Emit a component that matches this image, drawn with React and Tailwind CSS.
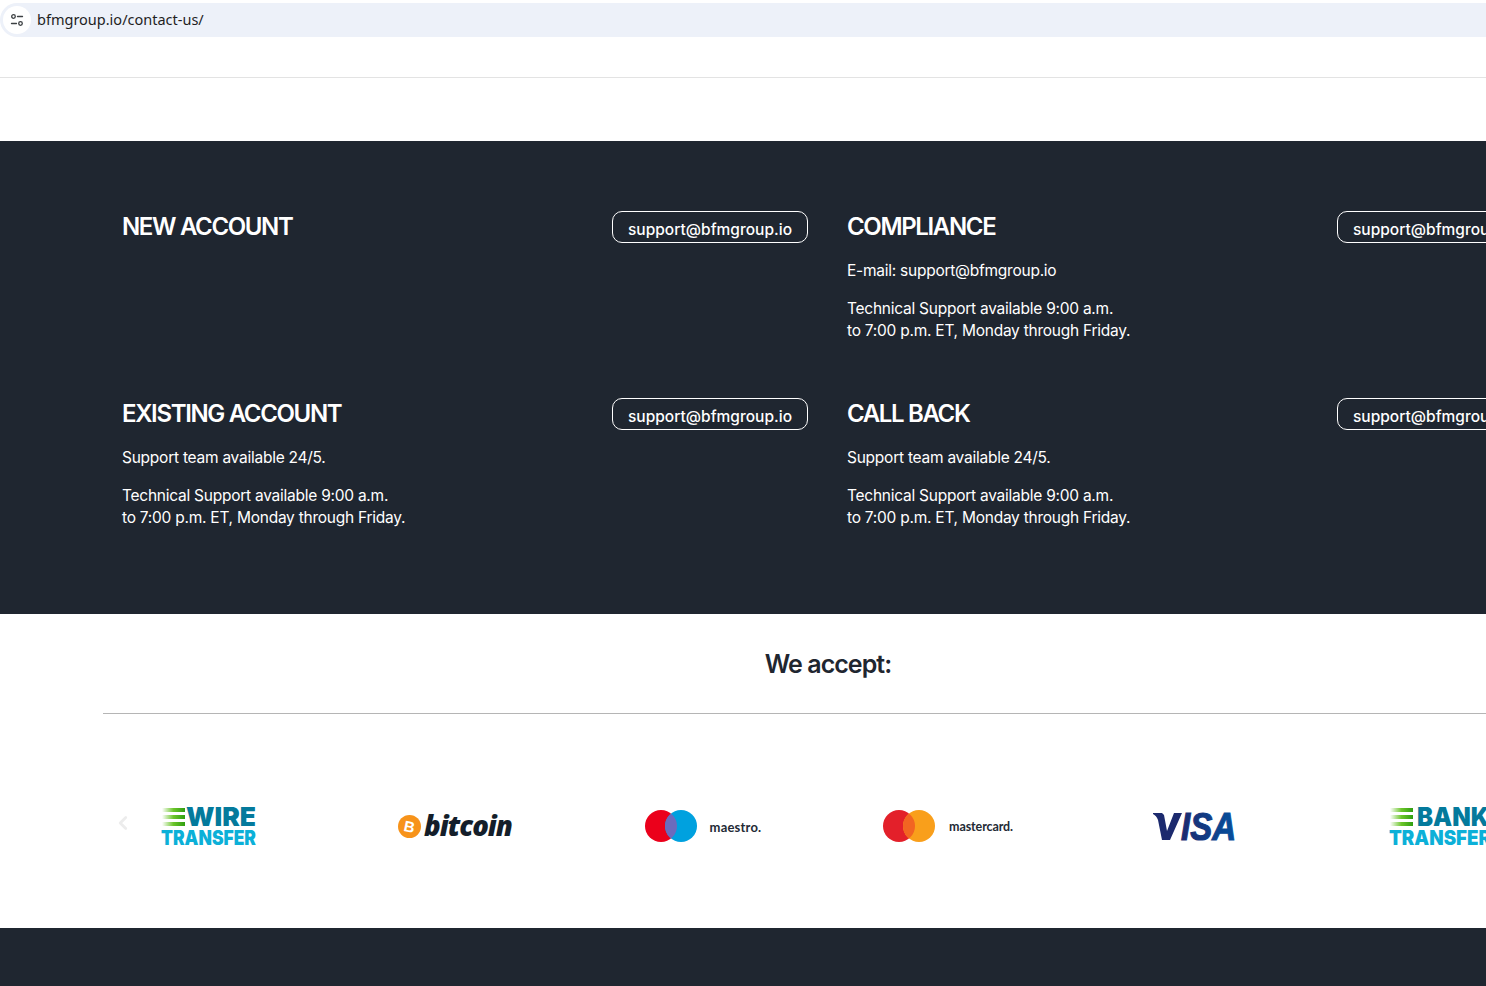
import { ChevronLeft } from 'lucide-react';

const FONT = "font-['Inter','Noto_Sans',sans-serif]";

function ContactCard({ title, groups }) {
  return (
    <div className="flex h-[187px] items-start justify-between">
      <div>
        <h3 className="mt-[1px] h-[30px] text-[24px] leading-[30px] font-semibold tracking-[-1.35px] text-white">{title}</h3>
        <div className="mt-[18px] text-[15.5px] leading-[22.5px] tracking-[-0.25px] text-white">
          {groups.map((group, i) => (
            <p key={i} className={i > 0 ? 'mt-[15px]' : ''}>
              {group.map((line, j) => (
                <span key={j} className="block">{line}</span>
              ))}
            </p>
          ))}
        </div>
      </div>
      <a className="flex h-[32px] w-[196px] shrink-0 items-center justify-center rounded-[10px] border border-white pt-[6px] text-[15.5px] font-medium tracking-[0.02px] text-white">
        support@bfmgroup.io
      </a>
    </div>
  );
}

function TransferLogo({ top, bottom, topX, topWidth, bottomWidth, width }) {
  return (
    <svg width={width} height="41" viewBox={`0 0 ${width} 41`}>
      <defs>
        <linearGradient id={`fade-${top}`} x1="0" x2="1" y1="0" y2="0">
          <stop offset="0" stopColor="#ffffff" />
          <stop offset="0.5" stopColor="#6cc52a" />
          <stop offset="1" stopColor="#2f9e10" />
        </linearGradient>
      </defs>
      <rect x="1" y="2" width="23" height="4" fill={`url(#fade-${top})`} />
      <rect x="1" y="9" width="23" height="4" fill={`url(#fade-${top})`} />
      <rect x="1" y="16" width="23" height="4" fill={`url(#fade-${top})`} />
      <text x={topX} y="20" textLength={topWidth} lengthAdjust="spacingAndGlyphs" fontFamily="Inter, sans-serif" fontWeight="900" fontSize="26" fill="#047a9c">{top}</text>
      <text x="0" y="39" textLength={bottomWidth} lengthAdjust="spacingAndGlyphs" fontFamily="Inter, sans-serif" fontWeight="900" fontSize="20.5" fill="#0cb0d8">{bottom}</text>
    </svg>
  );
}

function BitcoinLogo() {
  return (
    <div className="flex items-center gap-[3px]">
      <svg width="23" height="23" viewBox="0 0 23 23">
        <circle cx="11.5" cy="11.5" r="11.5" fill="#f7931a" />
        <text x="11.5" y="17" textAnchor="middle" fontFamily="Liberation Sans, sans-serif" fontWeight="700" fontSize="15" fill="#fff" transform="rotate(12 11.5 11.5)">B</text>
      </svg>
      <span className="font-['Open_Sans',sans-serif] text-[27.5px] leading-[32px] font-extrabold tracking-[-1px] text-[#141e2a] italic">bitcoin</span>
    </div>
  );
}

function CardLogo({ left, right, mix, label, labelClass, gap }) {
  return (
    <div className="flex items-center">
      <svg width="52" height="34" viewBox="0 0 52 34">
        <defs>
          <clipPath id={`clip-${label}`}>
            <circle cx="16" cy="17" r="16" />
          </clipPath>
        </defs>
        <circle cx="16" cy="17" r="16" fill={left} />
        <circle cx="36" cy="17" r="16" fill={right} />
        <circle cx="36" cy="17" r="16" fill={mix} clipPath={`url(#clip-${label})`} />
      </svg>
      <span className={`pt-[3px] font-['Lato',sans-serif] font-bold text-[#232a35] ${gap} ${labelClass}`}>{label}</span>
    </div>
  );
}

function VisaLogo() {
  return (
    <svg width="84" height="32" viewBox="0 0 84 32">
      <defs>
        <linearGradient id="visa-fill" x1="0" x2="1" y1="0" y2="0">
          <stop offset="0" stopColor="#1c2a6e" />
          <stop offset="1" stopColor="#05509e" />
        </linearGradient>
      </defs>
      <path d="M0 3h9l2 2 3 16 7-18h8L17 30H9L5 10C4 7 2 5 0 4z" fill="#1c2a6e" />
      <text x="28" y="30" textLength="55" lengthAdjust="spacingAndGlyphs" fontFamily="Liberation Sans, sans-serif" fontWeight="700" fontStyle="italic" fontSize="38" fill="url(#visa-fill)" stroke="url(#visa-fill)" strokeWidth="1.2">ISA</text>
    </svg>
  );
}

export default function App() {
  const support = ['Support team available 24/5.'];
  const hours = ['Technical Support available 9:00 a.m.', 'to 7:00 p.m. ET, Monday through Friday.'];

  return (
    <div className={`flex h-[986px] w-[1486px] flex-col overflow-hidden bg-white ${FONT}`}>
      <div className="h-[78px] shrink-0 border-b border-[#e3e3e3] pt-[3px]">
        <div className="flex h-[34px] items-center rounded-l-[17px] bg-[#edf1f9] pl-[3px]">
          <div className="flex h-[28px] w-[28px] items-center justify-center rounded-full bg-white">
            <svg width="14" height="14" viewBox="0 0 14 14" fill="none" stroke="#3c4043" strokeWidth="1.3" strokeLinecap="round">
              <circle cx="3.5" cy="3.5" r="1.8" />
              <path d="M7.5 3.5h5" />
              <circle cx="10.5" cy="10.5" r="1.8" />
              <path d="M1.5 10.5h5" />
            </svg>
          </div>
          <span className="ml-[6px] font-['Noto_Sans',sans-serif] text-[14.5px] text-[#1f1f1f]">bfmgroup.io/contact-us/</span>
        </div>
      </div>

      <div className="mt-[63px] h-[473px] shrink-0 bg-[#1f2630] pt-[70px] pl-[122px]">
        <div className="grid w-[1411px] grid-cols-[686px_686px] gap-x-[39px]">
          <ContactCard title="NEW ACCOUNT" groups={[]} />
          <ContactCard title="COMPLIANCE" groups={[['E-mail: support@bfmgroup.io'], hours]} />
          <ContactCard title="EXISTING ACCOUNT" groups={[support, hours]} />
          <ContactCard title="CALL BACK" groups={[support, hours]} />
        </div>
      </div>

      <div className="relative flex h-[314px] shrink-0 flex-col">
        <h2 className="pt-[33px] pl-[170px] text-center text-[25px] leading-[34px] font-semibold tracking-[-0.95px] text-[#1f2630]">We accept:</h2>
        <div className="mt-[32px] ml-[103px] border-t border-[#b5b5b5]" />
        <ChevronLeft className="absolute top-[198px] left-[112px] text-[#ececec]" size={22} strokeWidth={3} />
        <div className="mt-[82px] ml-[86px] flex w-[1500px] items-center">
          <div className="flex h-[60px] w-[246px] shrink-0 items-center justify-center"><TransferLogo top="WIRE" bottom="TRANSFER" topX={25} topWidth={70} bottomWidth={95} width={96} /></div>
          <div className="flex h-[60px] w-[246px] shrink-0 items-center justify-center"><BitcoinLogo /></div>
          <div className="flex h-[60px] w-[250px] shrink-0 items-center justify-center"><CardLogo left="#eb001b" right="#00a1df" mix="#6c6bbd" label="maestro." labelClass="text-[13px] tracking-[0.2px]" gap="ml-[13px]" /></div>
          <div className="flex h-[60px] w-[240px] shrink-0 items-center justify-center"><CardLogo left="#e3202a" right="#f99f1b" mix="#f26522" label="mastercard." labelClass="text-[12.5px] tracking-[-0.1px]" gap="ml-[14px]" /></div>
          <div className="flex h-[60px] w-[246px] shrink-0 items-center justify-center pl-[7px]"><VisaLogo /></div>
          <div className="flex h-[60px] w-[193px] shrink-0 items-center pl-[75px]"><TransferLogo top="BANK" bottom="TRANSFER" topX={28} topWidth={72} bottomWidth={102} width={118} /></div>
        </div>
      </div>

      <div className="flex-1 bg-[#1f2630]" />
    </div>
  );
}
